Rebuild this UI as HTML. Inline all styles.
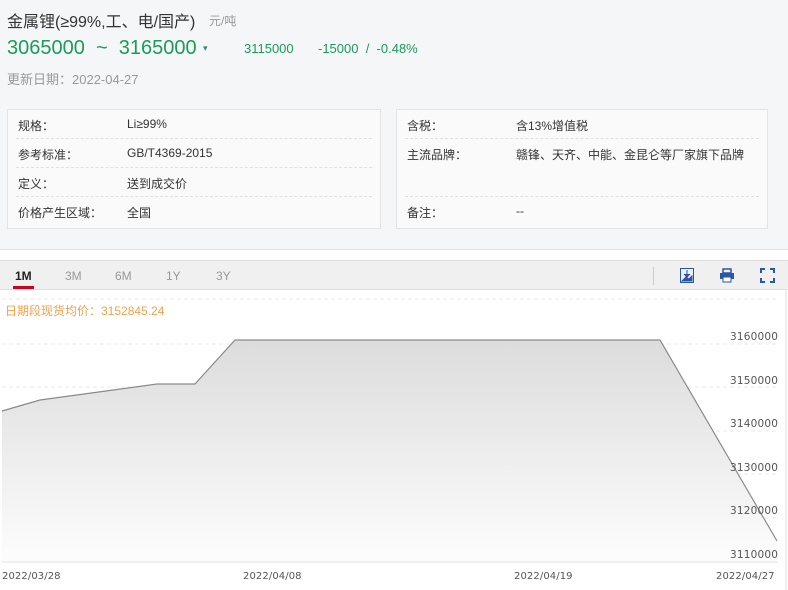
<!DOCTYPE html>
<html><head><meta charset="utf-8"><style>
*{margin:0;padding:0;box-sizing:border-box}
body{width:788px;height:590px;overflow:hidden;background:#fff;font-family:"Liberation Sans","Noto Sans CJK SC",sans-serif;position:relative}
.top{position:absolute;left:0;top:0;width:788px;height:250px;background:#f5f6f8;border-bottom:1px solid #e4e4e4}
.abs{position:absolute;white-space:nowrap}
.box{position:absolute;top:109px;height:120px;background:#fafafb;border:1px solid #e3e4e6}
.row{position:absolute;left:8px;right:8px;height:29px;border-bottom:1px dashed #e0e0e0;font-size:12px;color:#333}
.row span{position:absolute;top:7px}
.tabs{position:absolute;left:0;top:260px;width:788px;height:30px;background:#f0f0f0;border-top:1px solid #ddd;border-bottom:1px solid #ddd}
.tab{position:absolute;top:8px;font-size:12px;color:#999}
.ax{font-family:"DejaVu Sans",sans-serif;font-size:10.5px;color:#555;letter-spacing:0.2px}
.dx{font-family:"DejaVu Sans",sans-serif;font-size:10px;color:#555;letter-spacing:0.1px}
</style></head><body>
<div class="top"></div>
<div class="abs" style="left:7px;top:8px;font-size:16px;color:#333">金属锂(≥99%,工、电/国产)</div>
<div class="abs" style="left:209px;top:12px;font-size:12px;color:#999">元/吨</div>
<div class="abs" style="left:7px;top:37px;font-size:20px;color:#1a9c5a">3065000 &nbsp;~ &nbsp;3165000</div>
<div class="abs" style="left:203px;top:43px;font-size:9px;color:#1a9c5a">▾</div>
<div class="abs" style="left:244px;top:41px;font-size:13px;color:#1a9c5a">3115000</div>
<div class="abs" style="left:318px;top:41px;font-size:13px;color:#1a9c5a">-15000 &nbsp;/ &nbsp;-0.48%</div>
<div class="abs" style="left:7px;top:69px;font-size:13px;color:#999">更新日期：2022-04-27</div>
<div class="box" style="left:7px;width:374px">
<div class="row" style="top:0"><span style="left:2px">规格：</span><span style="left:111px">Li≥99%</span></div>
<div class="row" style="top:29px"><span style="left:2px">参考标准：</span><span style="left:111px">GB/T4369-2015</span></div>
<div class="row" style="top:58px"><span style="left:2px">定义：</span><span style="left:111px">送到成交价</span></div>
<div class="row" style="top:87px;border:0"><span style="left:2px">价格产生区域：</span><span style="left:111px">全国</span></div>
</div>
<div class="box" style="left:396px;width:372px">
<div class="row" style="top:0"><span style="left:2px">含税：</span><span style="left:111px">含13%增值税</span></div>
<div class="row" style="top:29px;height:58px"><span style="left:2px">主流品牌：</span><span style="left:111px">赣锋、天齐、中能、金昆仑等厂家旗下品牌</span></div>
<div class="row" style="top:87px;border:0"><span style="left:2px">备注：</span><span style="left:111px">--</span></div>
</div>
<div class="tabs">
<div class="tab" style="left:15px;color:#222;font-weight:bold">1M</div>
<div style="position:absolute;left:13px;top:25px;width:21px;height:3px;background:#d0021b"></div>
<div class="tab" style="left:65px">3M</div>
<div class="tab" style="left:115px">6M</div>
<div class="tab" style="left:166px">1Y</div>
<div class="tab" style="left:216px">3Y</div>
<div style="position:absolute;left:653px;top:6px;width:1px;height:18px;background:#ccc"></div>
<svg style="position:absolute;left:680px;top:7px" width="14" height="15"><rect x="0.5" y="0.5" width="13" height="14" fill="none" stroke="#2a56a8"/><path d="M7 2v6M4 6l3 3 3-3M2 13l4-4 3 2 3-3v5z" stroke="#2a56a8" fill="#2a56a8"/></svg>
<svg style="position:absolute;left:720px;top:7px" width="14" height="15"><rect x="3" y="1" width="8" height="4" fill="none" stroke="#2a56a8" stroke-width="1.5"/><rect x="0" y="5" width="14" height="6" fill="#2a56a8"/><rect x="3" y="9" width="8" height="5" fill="#fff" stroke="#2a56a8"/></svg>
<svg style="position:absolute;left:760px;top:7px" width="15" height="15" fill="none" stroke="#2a56a8" stroke-width="2"><path d="M1 5V1h4M10 1h4v4M14 10v4h-4M5 14H1v-4"/></svg>
</div>
<div class="abs" style="left:5px;top:302px;font-size:12px;color:#f5a04a">日期段现货均价：3152845.24</div>
<svg style="position:absolute;left:0;top:290px" width="788" height="300">
<defs><linearGradient id="g" x1="0" y1="0" x2="0" y2="1"><stop offset="0" stop-color="#dcdcdc"/><stop offset="1" stop-color="#fdfdfd"/></linearGradient></defs>
<g stroke="#eaeaea" stroke-dasharray="4,3"><line x1="2" y1="9" x2="778" y2="9"/><line x1="2" y1="54" x2="778" y2="54"/><line x1="2" y1="97" x2="778" y2="97"/><line x1="2" y1="141" x2="778" y2="141"/><line x1="2" y1="184" x2="778" y2="184"/><line x1="2" y1="228" x2="778" y2="228"/></g>
<path d="M2 121L40 110L157 94L195 94L235 50L660 50L777 251V272H2Z" fill="url(#g)"/>
<path d="M2 121L40 110L157 94L195 94L235 50L660 50L777 251" fill="none" stroke="#8a8a8a" stroke-width="1.2"/>
<line x1="2" y1="272" x2="778" y2="272" stroke="#e0e0e0"/>
<line x1="786" y1="0" x2="786" y2="300" stroke="#ddd"/>
</svg>
<div class="abs ax" style="left:730px;top:331px">3160000</div>
<div class="abs ax" style="left:730px;top:375px">3150000</div>
<div class="abs ax" style="left:730px;top:418px">3140000</div>
<div class="abs ax" style="left:730px;top:462px">3130000</div>
<div class="abs ax" style="left:730px;top:505px">3120000</div>
<div class="abs ax" style="left:730px;top:549px">3110000</div>
<div class="abs dx" style="left:2px;top:571px">2022/03/28</div>
<div class="abs dx" style="left:243px;top:571px">2022/04/08</div>
<div class="abs dx" style="left:514px;top:571px">2022/04/19</div>
<div class="abs dx" style="left:716px;top:571px">2022/04/27</div>
</body></html>
